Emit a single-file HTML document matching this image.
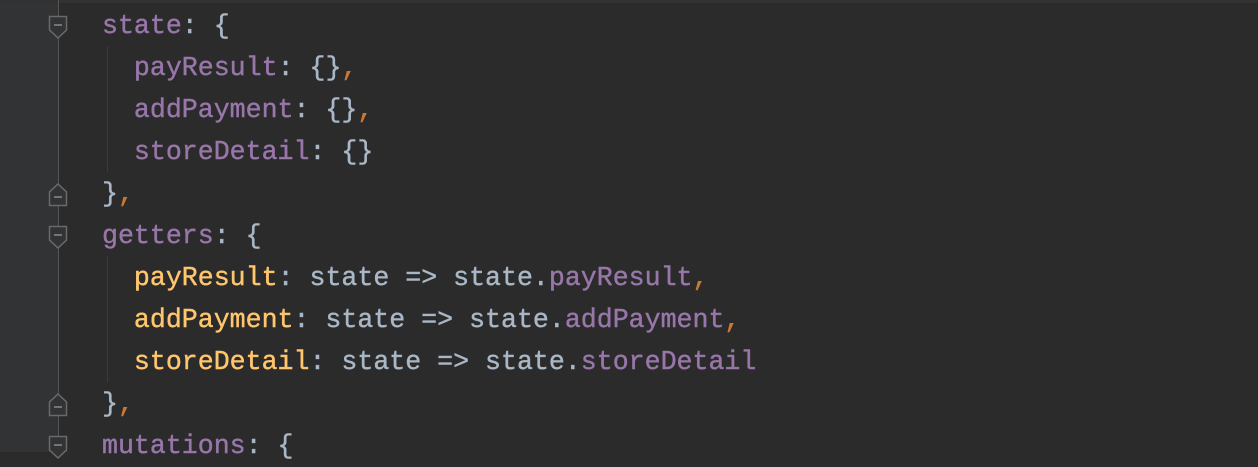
<!DOCTYPE html>
<html><head><style>
html,body{margin:0;padding:0;}
body{width:1258px;height:452px;background:#2b2b2b;overflow:hidden;position:relative;font-family:"Liberation Mono",monospace;}
.gut{position:absolute;left:0;top:0;width:58px;height:452px;background:#313335;}
.top{position:absolute;left:0;top:0;width:1258px;height:3px;background:#323232;}
.vl{position:absolute;left:58px;top:0;width:1px;height:452px;background:#555;}
.ig{position:absolute;left:107px;width:1px;background:#3b3b3b;}
.code{position:absolute;left:102px;top:5px;font-size:26.6px;line-height:42px;color:#a9b7c6;white-space:pre;-webkit-text-stroke:0.4px currentColor;}
.p{color:#9876aa}.o{color:#ffc66d}.c{color:#cc7832}
svg{position:absolute;left:48px;}
</style></head><body>
<div class="gut"></div><div class="top"></div><div class="vl"></div>
<div class="ig" style="top:46px;height:126px"></div>
<div class="ig" style="top:256px;height:126px"></div>
<svg style="top:15px" width="20" height="26"><path d="M1.5 1.5H18.5V15L10 23L1.5 15Z" fill="#313335" stroke="#6a6a6a" stroke-width="1.5"/><path d="M6 10H14" stroke="#8a8a8a" stroke-width="1.5"/></svg>
<svg style="top:181px" width="20" height="26"><path d="M1.5 24.5H18.5V11L10 3L1.5 11Z" fill="#313335" stroke="#6a6a6a" stroke-width="1.5"/><path d="M6 16H14" stroke="#8a8a8a" stroke-width="1.5"/></svg>
<svg style="top:225px" width="20" height="26"><path d="M1.5 1.5H18.5V15L10 23L1.5 15Z" fill="#313335" stroke="#6a6a6a" stroke-width="1.5"/><path d="M6 10H14" stroke="#8a8a8a" stroke-width="1.5"/></svg>
<svg style="top:391px" width="20" height="26"><path d="M1.5 24.5H18.5V11L10 3L1.5 11Z" fill="#313335" stroke="#6a6a6a" stroke-width="1.5"/><path d="M6 16H14" stroke="#8a8a8a" stroke-width="1.5"/></svg>
<svg style="top:435px" width="20" height="26"><path d="M1.5 1.5H18.5V15L10 23L1.5 15Z" fill="#313335" stroke="#6a6a6a" stroke-width="1.5"/><path d="M6 10H14" stroke="#8a8a8a" stroke-width="1.5"/></svg>
<div class="code"><span class="p">state</span>: {
  <span class="p">payResult</span>: {}<span class="c">,</span>
  <span class="p">addPayment</span>: {}<span class="c">,</span>
  <span class="p">storeDetail</span>: {}
}<span class="c">,</span>
<span class="p">getters</span>: {
  <span class="o">payResult</span>: state =&gt; state.<span class="p">payResult</span><span class="c">,</span>
  <span class="o">addPayment</span>: state =&gt; state.<span class="p">addPayment</span><span class="c">,</span>
  <span class="o">storeDetail</span>: state =&gt; state.<span class="p">storeDetail</span>
}<span class="c">,</span>
<span class="p">mutations</span>: {</div>
</body></html>
